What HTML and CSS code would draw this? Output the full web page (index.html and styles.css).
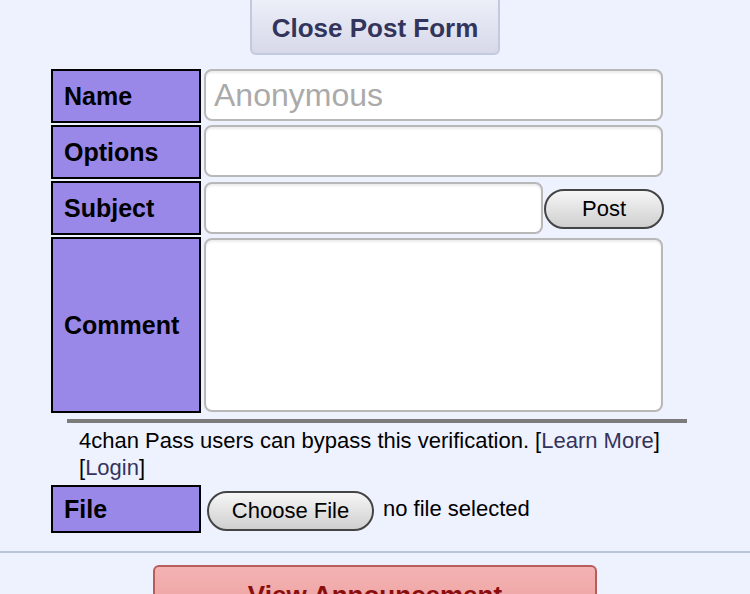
FILE: index.html
```html
<!DOCTYPE html>
<html lang="en">

<head>
    <meta charset="UTF-8">
    <meta name="viewport" content="width=device-width, initial-scale=1.0">
    <title>Post Form</title>
    <link rel="stylesheet" href="styles.css">
</head>

<body>
    <div class="toggle-wrap">
        <button class="toggle-btn">Close Post Form</button>
    </div>

    <form class="post-form">
        <div class="row">
            <div class="label">Name</div>
            <input type="text" class="field" placeholder="Anonymous">
        </div>
        <div class="row">
            <div class="label">Options</div>
            <input type="text" class="field">
        </div>
        <div class="row">
            <div class="label">Subject</div>
            <div class="subject-line">
                <input type="text" class="field subject">
                <button type="button" class="post-btn">Post</button>
            </div>
        </div>
        <div class="row row-tall">
            <div class="label">Comment</div>
            <textarea class="field comment"></textarea>
        </div>
    </form>

    <div class="captcha">
        <p>4chan Pass users can bypass this verification. [<a href="#">Learn More</a>] [<a href="#">Login</a>]</p>
    </div>

    <div class="file-row">
        <div class="label">File</div>
        <button type="button" class="choose-btn">Choose File</button>
        <span class="file-name">no file selected</span>
    </div>

    <hr class="divider">

    <div class="announce-wrap">
        <button class="announce-btn">View Announcement</button>
    </div>
</body>

</html>
```

FILE: styles.css
```css
/* Page base */
body {
    margin: 0;
    background-color: #eef2ff;
    font-family: "Liberation Sans", Arial, sans-serif;
    color: #000;
    overflow: hidden;
}

/* Top toggle button */
.toggle-wrap {
    display: flex;
    justify-content: center;
}

.toggle-btn {
    width: 250px;
    height: 55px;
    border: 2px solid #c2cade;
    border-top: none;
    border-radius: 0 0 6px 6px;
    background: linear-gradient(#eceef8, #d7d9ea);
    color: #33345c;
    font-family: "Liberation Sans", Arial, sans-serif;
    font-weight: bold;
    font-size: 26px;
    padding-top: 4px;
}

/* Form grid */
.post-form {
    width: 612px;
    margin: 14px 0 0 51px;
    display: flex;
    flex-direction: column;
    gap: 2px;
}

.row {
    display: grid;
    grid-template-columns: 150px 1fr;
    column-gap: 3px;
    height: 54px;
}

.row-tall {
    height: 176px;
}

.label {
    box-sizing: border-box;
    background-color: #9988e8;
    border: 2px solid #000;
    font-weight: bold;
    font-size: 25px;
    padding-left: 11px;
    display: flex;
    align-items: center;
}

.field {
    box-sizing: border-box;
    height: 52px;
    border: 2px solid #b8b8b8;
    border-radius: 8px;
    background: #fff;
    font-family: "Liberation Sans", Arial, sans-serif;
    font-size: 32px;
    padding: 0 8px;
    box-shadow: inset 0 2px 2px rgba(0, 0, 0, 0.08);
}

.field::placeholder {
    color: #aaa;
}

.subject-line {
    display: flex;
    align-items: center;
    gap: 1px;
}

.subject {
    width: 339px;
}

.post-btn {
    width: 120px;
    height: 40px;
    margin-top: 2px;
    border: 2px solid #444;
    border-radius: 20px;
    background: linear-gradient(#f6f6f6, #cfcfcf);
    font-family: "Liberation Sans", Arial, sans-serif;
    font-size: 22px;
    color: #000;
}

.comment {
    height: 174px;
    resize: none;
    margin-top: 1px;
}

/* Captcha note */
.captcha {
    margin: 6px 0 0 67px;
    width: 620px;
    border-top: 4px solid #7c7c7c;
}

.captcha p {
    margin: 4px 0 0 12px;
    font-size: 22px;
    line-height: 27px;
    width: 600px;
}

.captcha a {
    color: #34345c;
    text-decoration: none;
}

/* File row */
.file-row {
    display: flex;
    align-items: center;
    margin: 4px 0 0 51px;
    height: 48px;
}

.file-row .label {
    width: 150px;
    height: 48px;
}

.choose-btn {
    width: 167px;
    height: 40px;
    margin-left: 6px;
    margin-top: 4px;
    border: 2px solid #444;
    border-radius: 20px;
    background: linear-gradient(#f6f6f6, #cfcfcf);
    font-family: "Liberation Sans", Arial, sans-serif;
    font-size: 22px;
    color: #000;
}

.file-name {
    font-size: 22px;
    margin-left: 9px;
    margin-top: -1px;
}

/* Bottom divider */
.divider {
    border: none;
    border-top: 2px solid #b7c5d9;
    margin: 18px 0 0;
}

/* Announcement button */
.announce-wrap {
    padding: 12px 0 0 153px;
}

.announce-btn {
    width: 444px;
    height: 56px;
    border: 2px solid #b85c5c;
    border-radius: 6px;
    background: linear-gradient(#f4b2b2, #eba0a0);
    color: #8a0e0e;
    font-family: "Liberation Sans", Arial, sans-serif;
    font-weight: bold;
    font-size: 26px;
    padding-top: 6px;
}
```
